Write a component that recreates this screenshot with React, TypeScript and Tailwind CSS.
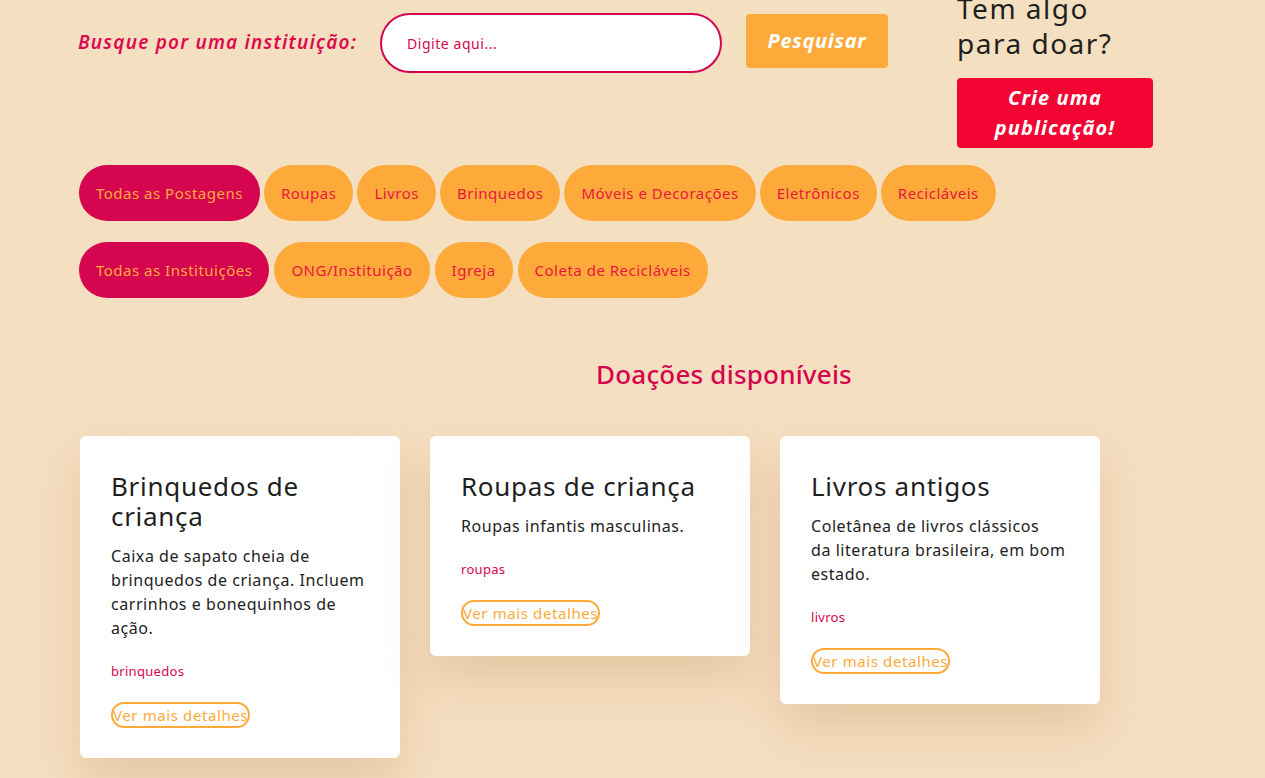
import React from "react";

const postFilters = ["Todas as Postagens", "Roupas", "Livros", "Brinquedos", "Móveis e Decorações", "Eletrônicos", "Recicláveis"];
const instFilters = ["Todas as Instituições", "ONG/Instituição", "Igreja", "Coleta de Recicláveis"];

const donations = [
  {
    title: "Brinquedos de criança",
    text: "Caixa de sapato cheia de brinquedos de criança. Incluem carrinhos e bonequinhos de ação.",
    tag: "brinquedos",
  },
  { title: "Roupas de criança", text: "Roupas infantis masculinas.", tag: "roupas" },
  {
    title: "Livros antigos",
    text: "Coletânea de livros clássicos\nda literatura brasileira, em bom estado.",
    tag: "livros",
  },
];

function Pill({ label, active }: { label: string; active: boolean }) {
  return (
    <button
      className={`h-[56px] px-[17px] rounded-full text-[15px] tracking-[0.5px] ${
        active ? "bg-[#d6054f] text-[#fdab3c]" : "bg-[#fdaa3b] text-[#e8163f]"
      }`}
    >
      {label}
    </button>
  );
}

function DonationCard({ title, text, tag }: { title: string; text: string; tag: string }) {
  return (
    <div className="w-[320px] bg-white rounded-[6px] px-[31px] pt-[35px] pb-[30px] shadow-[0_24px_48px_rgba(196,146,96,0.3)]">
      <h3 className="text-[26px] leading-[30px] tracking-[0.7px] text-[#1f1f1f]">{title}</h3>
      <p className="mt-[13px] text-[16px] leading-[24px] tracking-[0.55px] text-[#222] whitespace-pre-line">{text}</p>
      <p className="mt-[21px] text-[13px] leading-[20px] tracking-[0.3px] text-[#d6054f]">{tag}</p>
      <button className="mt-[21px] h-[26px] border-2 border-[#fdaa3b] rounded-full text-[15px] leading-[20px] tracking-[0.6px] text-[#fdaa3b]">
        Ver mais detalhes
      </button>
    </div>
  );
}

export default function App() {
  return (
    <div className="min-h-screen bg-[#f5dfc1] pl-[78px] overflow-hidden" style={{ fontFamily: '"Noto Sans", sans-serif' }}>
      <div className="flex items-start">
        <span className="w-[280px] mt-[29px] text-[19px] leading-[26px] italic font-semibold tracking-[1.2px] text-[#dc0a4f] whitespace-nowrap">
          Busque por uma instituição:
        </span>
        <div className="ml-[22px] mt-[13px] w-[342px] h-[60px] bg-white border-2 border-[#d6054f] rounded-full flex items-center pl-[25px]">
          <span className="text-[14px] tracking-[0.55px] text-[#d6054f]">Digite aqui...</span>
        </div>
        <button className="ml-[24px] mt-[14px] w-[142px] h-[54px] bg-[#fdaa3b] rounded-[4px] text-white text-[20px] tracking-[0.7px] italic font-bold">
          Pesquisar
        </button>
        <div className="ml-[69px] -mt-[9px] flex flex-col">
          <h2 className="text-[28px] leading-[35px] tracking-[1.5px] text-[#1f1f1f]">
            Tem algo
            <br />
            para doar?
          </h2>
          <button className="mt-[17px] w-[196px] h-[70px] bg-[#f20532] rounded-[4px] text-white text-[20px] leading-[30px] tracking-[1.1px] italic font-bold">
            Crie uma
            <br />
            publicação!
          </button>
        </div>
      </div>

      <div className="mt-[17px] pl-[1px] flex flex-col gap-[21px]">
        <div className="flex gap-[4px]">
          {postFilters.map((f, i) => (
            <Pill key={f} label={f} active={i === 0} />
          ))}
        </div>
        <div className="flex gap-[5px]">
          {instFilters.map((f, i) => (
            <Pill key={f} label={f} active={i === 0} />
          ))}
        </div>
      </div>

      <h2 className="mt-[58px] w-[1292px] text-center text-[26px] leading-[36px] tracking-[0.2px] font-medium text-[#d6054f]">
        Doações disponíveis
      </h2>

      <div className="mt-[44px] pl-[2px] flex items-start gap-[30px] pb-[40px]">
        {donations.map((d) => (
          <DonationCard key={d.title} {...d} />
        ))}
      </div>
    </div>
  );
}
